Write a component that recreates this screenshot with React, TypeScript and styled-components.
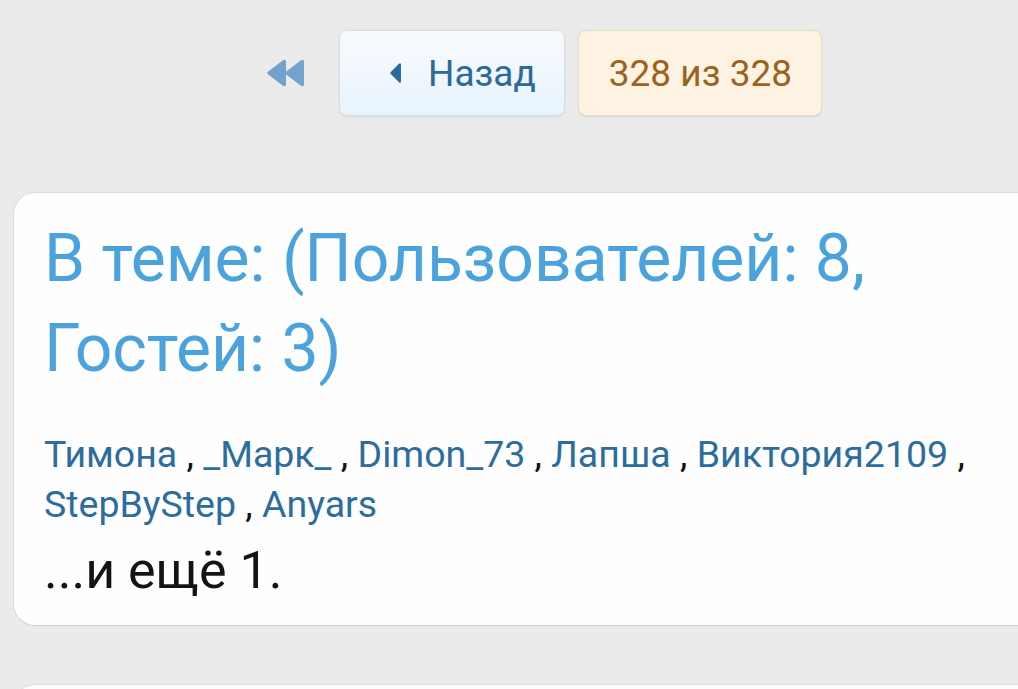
import React from "react";
import styled, { createGlobalStyle } from "styled-components";

const Global = createGlobalStyle`
  html, body {
    margin: 0;
    padding: 0;
    background: #ebebeb;
    font-family: Roboto, "Noto Sans", "Liberation Sans", sans-serif;
  }
  #root { min-height: 689px; }
`;

const Page = styled.div`
  width: 1018px;
  height: 689px;
  overflow: hidden;
  background: #ebebeb;
`;

const PageNav = styled.nav`
  display: flex;
  align-items: center;
  padding: 30px 0 0 266px;
  height: 86px;
`;

const FirstLink = styled.a`
  display: flex;
  align-items: center;
  width: 38px;
  height: 28px;
  margin-right: 35px;
  color: #72a3cc;
`;

const NavButton = styled.a<{ $variant: "prev" | "current" }>`
  display: flex;
  align-items: center;
  box-sizing: border-box;
  height: 86px;
  border-radius: 8px;
  border: 1px solid ${(p) => (p.$variant === "prev" ? "#d6dde4" : "#e6dccd")};
  box-shadow: 0 1px 2px rgba(0, 0, 0, 0.08);
  background: ${(p) =>
    p.$variant === "prev"
      ? "linear-gradient(to bottom, #f8fbfe, #e8f3fc)"
      : "#fef3e3"};
  color: ${(p) => (p.$variant === "prev" ? "#2b6a9a" : "#9c6320")};
  font-size: 37px;
  padding: ${(p) => (p.$variant === "prev" ? "0 28px 0 50px" : "0 29px 0 30px")};
  margin-right: 13px;
  text-decoration: none;
  white-space: nowrap;
`;

const PrevArrow = styled.span`
  display: inline-flex;
  width: 11px;
  height: 20px;
  margin-right: 27px;
  color: #2b6a9a;
`;

const Card = styled.section<{ $stub?: boolean }>`
  box-sizing: border-box;
  margin: ${(p) => (p.$stub ? "58px" : "76px")} -40px 0 13px;
  background: #fefefe;
  border: 1px solid #dcdcdc;
  border-bottom-color: #cfcfcf;
  border-radius: 22px;
  padding: 21px 30px 21px 30px;
  min-height: ${(p) => (p.$stub ? "60px" : "auto")};
`;

const Title = styled.h3`
  margin: 0;
  font-weight: 400;
  font-size: 66px;
  line-height: 90px;
  color: #4ba3de;
  max-width: 900px;
`;

const UserList = styled.div`
  margin-top: 35px;
  font-size: 37.5px;
  line-height: 50px;
  color: #141414;
  max-width: 940px;
`;

const UserLink = styled.a`
  color: #2c6d9e;
  text-decoration: none;
`;

const More = styled.div`
  margin-top: 9px;
  font-size: 52px;
  line-height: 66px;
  color: #141414;
`;

const users = [
  "Тимона",
  "_Марк_",
  "Dimon_73",
  "Лапша",
  "Виктория2109",
  "StepByStep",
  "Anyars",
];

export default function App() {
  return (
    <Page>
      <Global />
      <PageNav>
        <FirstLink href="#">
          <svg width="38" height="28" viewBox="0 0 38 28">
            <path
              d="M2.2 12.4 L16.6 1.6 Q20 -0.6 20 3 V25 Q20 28.6 16.6 26.4 L2.2 15.6 Q0 14 2.2 12.4 Z"
              fill="currentColor"
            />
            <path
              d="M20.2 12.4 L34.6 1.6 Q38 -0.6 38 3 V25 Q38 28.6 34.6 26.4 L20.2 15.6 Q18 14 20.2 12.4 Z"
              fill="currentColor"
            />
          </svg>
        </FirstLink>
        <NavButton $variant="prev" href="#">
          <PrevArrow>
            <svg width="11" height="20" viewBox="0 0 11 20">
              <path d="M1 8.8 L9 0.8 Q11 -0.8 11 2 V18 Q11 20.8 9 19.2 L1 11.2 Q-0.3 10 1 8.8 Z" fill="currentColor" />
            </svg>
          </PrevArrow>
          Назад
        </NavButton>
        <NavButton $variant="current">328 из 328</NavButton>
      </PageNav>
      <Card>
        <Title>В теме: (Пользователей: 8, Гостей: 3)</Title>
        <UserList>
          {users.map((u, i) => (
            <React.Fragment key={u}>
              <UserLink href="#">{u}</UserLink>
              {i < users.length - 1 ? " , " : ""}
            </React.Fragment>
          ))}
        </UserList>
        <More>...и ещё 1.</More>
      </Card>
      <Card $stub />
    </Page>
  );
}
